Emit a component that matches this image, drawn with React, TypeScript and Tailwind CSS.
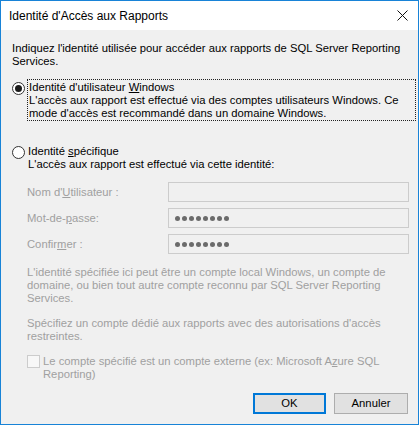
import React from "react";

const font = { fontFamily: '"Liberation Sans", Arial, sans-serif' };

function Radio({ checked }: { checked: boolean }) {
  return (
    <div className="w-[13px] h-[13px] rounded-full border border-[#333333] bg-white flex items-center justify-center shrink-0">
      {checked && <div className="w-[7px] h-[7px] rounded-full bg-[#1a1a1a]" />}
    </div>
  );
}

function Dots() {
  return (
    <div className="flex gap-[2px] pl-[6px]">
      {[0, 1, 2, 3, 4, 5, 6, 7].map((i) => (
        <div key={i} className="w-[5px] h-[5px] rounded-full bg-[#6b6b6b]" />
      ))}
    </div>
  );
}

function Field({ label, dots }: { label: React.ReactNode; dots?: boolean }) {
  return (
    <div className="flex items-center h-[20px]">
      <div className="w-[156px] pl-[15px] text-[#a0a0a0] leading-[13px]">{label}</div>
      <div className="w-[241px] h-[20px] border border-[#cccccc] bg-[#f0f0f0] flex items-center">
        {dots && <Dots />}
      </div>
    </div>
  );
}

export default function App() {
  return (
    <div
      className="w-[419px] h-[425px] border border-[#1883d7] bg-[#f0f0f0] flex flex-col text-[11.25px] text-black overflow-hidden"
      style={font}
    >
      <div className="h-[29px] bg-white flex items-center justify-between shrink-0">
        <div className="pl-[8px] text-[12px] pt-[1px]">Identité d'Accès aux Rapports</div>
        <svg width="11" height="11" viewBox="0 0 11 11" className="mr-[10px]">
          <path d="M0.5 0.5 L10.5 10.5 M10.5 0.5 L0.5 10.5" stroke="#111" strokeWidth="1" />
        </svg>
      </div>

      <div className="flex flex-col pl-[11px] leading-[13px]">
        <div className="mt-[12px] whitespace-nowrap">
          <div>Indiquez l'identité utilisée pour accéder aux rapports de SQL Server Reporting</div>
          <div>Services.</div>
        </div>

        <div className="mt-[11px] flex items-start">
          <div className="mt-[3px]">
            <Radio checked />
          </div>
          <div className="ml-[2px] w-[389px] h-[42px] border border-dotted border-[#222] pl-[1px] pt-[1px] whitespace-nowrap">
            <div>
              Identité d'utilisateur <span className="underline">W</span>indows
            </div>
            <div>L'accès aux rapport est effectué via des comptes utilisateurs Windows. Ce</div>
            <div>mode d'accès est recommandé dans un domaine Windows.</div>
          </div>
        </div>

        <div className="mt-[24px] flex items-start">
          <div className="mt-[1px]">
            <Radio checked={false} />
          </div>
          <div className="ml-[3px] whitespace-nowrap">
            <div>
              Identité <span className="underline">s</span>pécifique
            </div>
            <div>L'accès aux rapport est effectué via cette identité:</div>
          </div>
        </div>

        <div className="mt-[11px] flex flex-col gap-[6px]">
          <Field
            label={
              <>
                Nom d'<span className="underline">U</span>tilisateur :
              </>
            }
          />
          <Field
            label={
              <>
                Mot-de-<span className="underline">p</span>asse:
              </>
            }
            dots
          />
          <Field
            label={
              <>
                Confir<span className="underline">m</span>er :
              </>
            }
            dots
          />
        </div>

        <div className="mt-[12px] pl-[15px] text-[#a0a0a0] whitespace-nowrap">
          <div>L'identité spécifiée ici peut être un compte local Windows, un compte de</div>
          <div>domaine, ou bien tout autre compte reconnu par SQL Server Reporting</div>
          <div>Services.</div>
        </div>

        <div className="mt-[12px] pl-[15px] text-[#a0a0a0] whitespace-nowrap">
          <div>Spécifiez un compte dédié aux rapports avec des autorisations d'accès</div>
          <div>restreintes.</div>
        </div>

        <div className="mt-[12px] pl-[15px] flex items-start text-[#a0a0a0] whitespace-nowrap">
          <div className="w-[13px] h-[13px] border border-[#cccccc] bg-[#f7f7f7] shrink-0" />
          <div className="ml-[3px]">
            <div>
              Le compte spécifié est un compte externe (ex: Microsoft A<span className="underline">z</span>ure SQL
            </div>
            <div>Reporting)</div>
          </div>
        </div>

        <div className="mt-[12px] flex justify-end gap-[8px] pr-[10px]">
          <button className="w-[73px] h-[21px] border-2 border-[#0078d7] bg-[#e1e1e1] flex items-center justify-center text-[11.25px]">
            OK
          </button>
          <button className="w-[74px] h-[21px] border border-[#adadad] bg-[#e1e1e1] flex items-center justify-center text-[11.25px]">
            Annuler
          </button>
        </div>
      </div>
    </div>
  );
}
